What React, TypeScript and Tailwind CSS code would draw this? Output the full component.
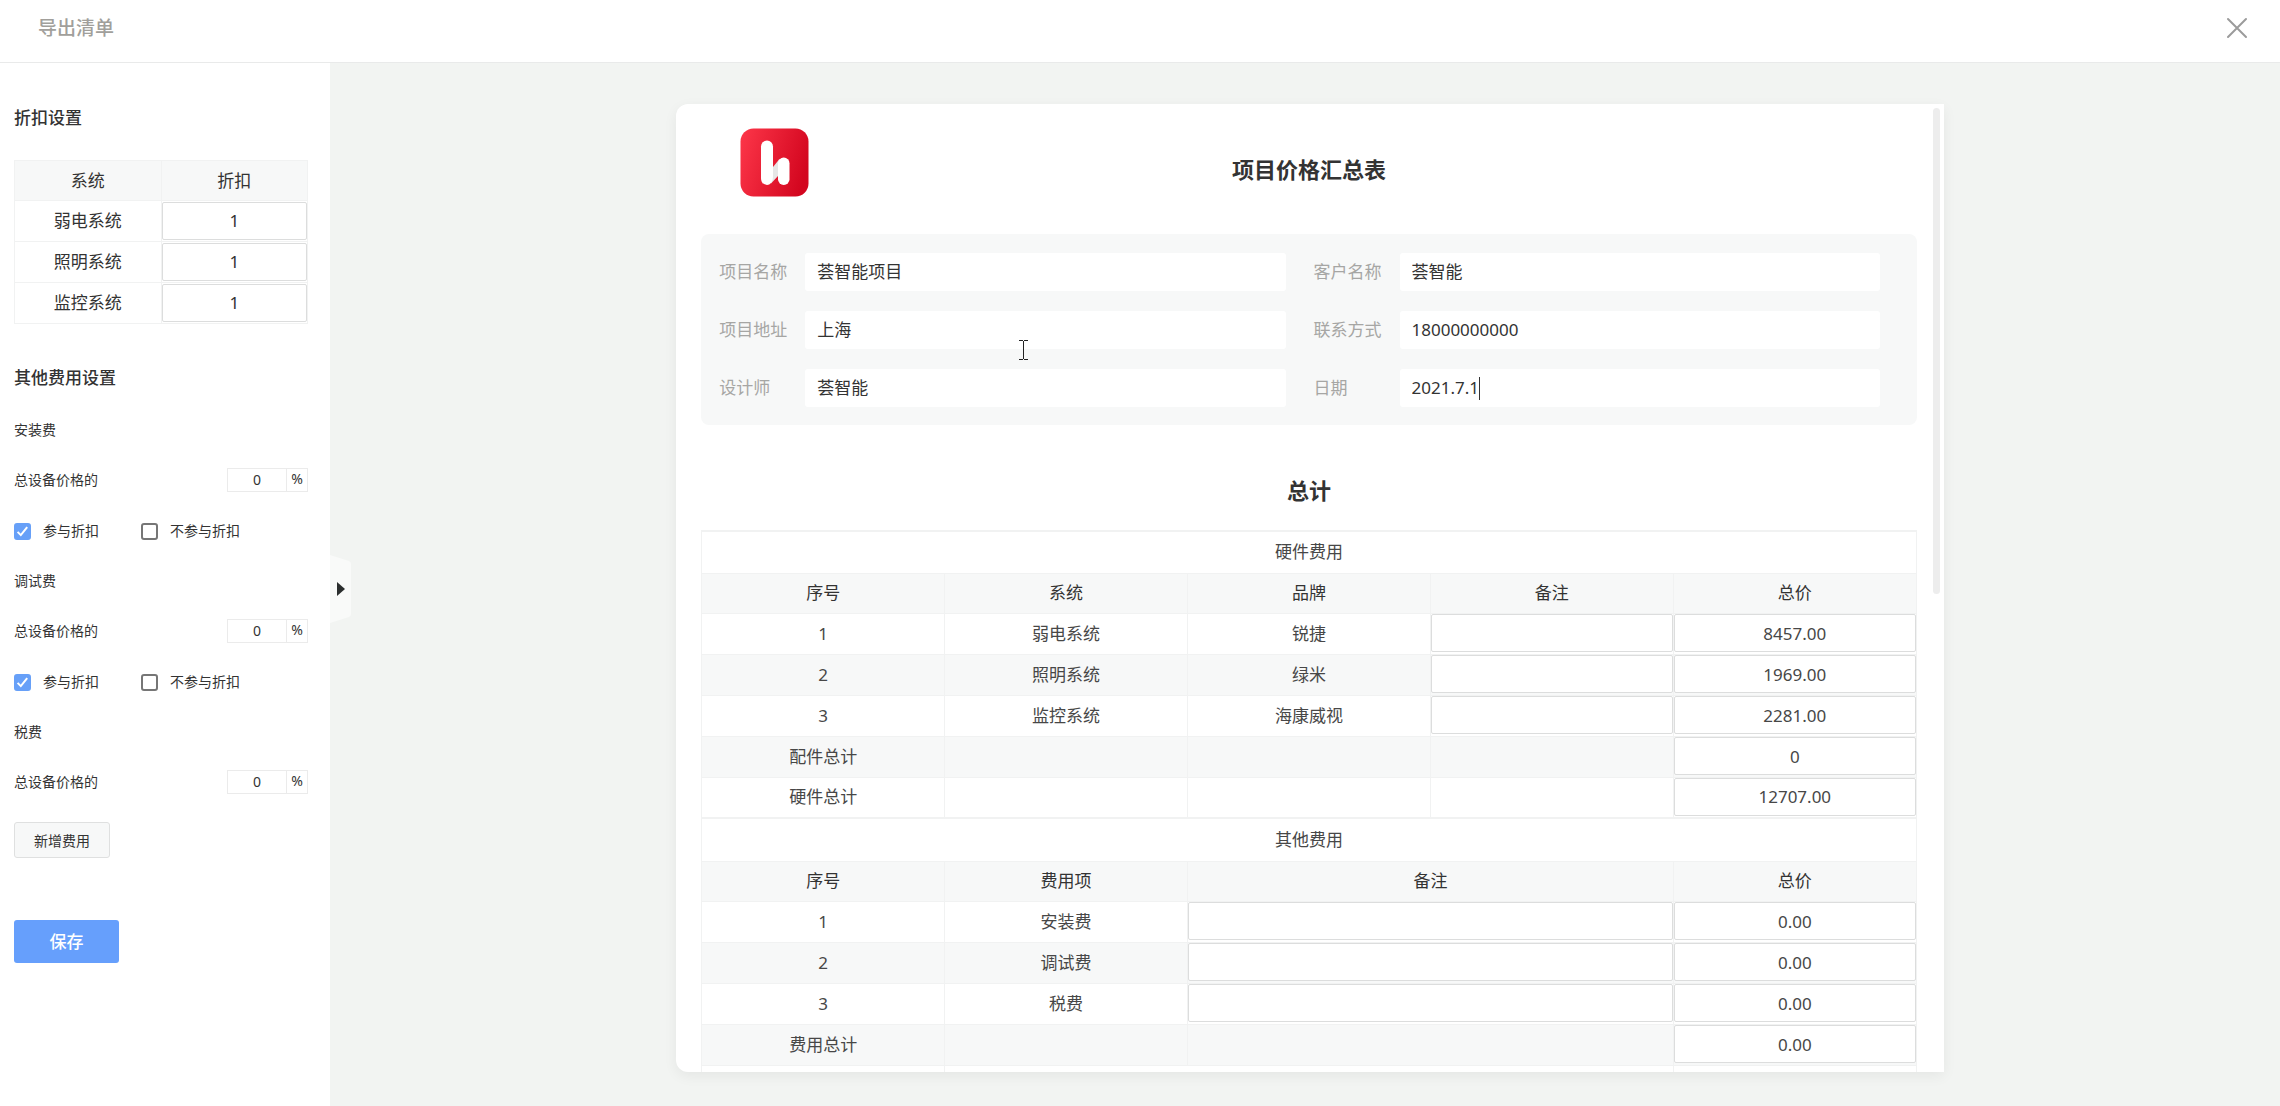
import React, { useState } from "react";

const DISCOUNTS = ["弱电系统", "照明系统", "监控系统"];

const HARDWARE = [
  { system: "弱电系统", brand: "锐捷", total: "8457.00" },
  { system: "照明系统", brand: "绿米", total: "1969.00" },
  { system: "监控系统", brand: "海康威视", total: "2281.00" },
];

const OTHER_FEES = ["安装费", "调试费", "税费"];

const CELL = "border border-[#f1f2f2] text-center font-normal";
const INPUT_CELL = "border border-[#f1f2f2] pb-px";

const CellInput = ({ label, value = "" }: { label: string; value?: string }) => (
  <input
    aria-label={label}
    defaultValue={value}
    className="block h-[38px] w-full rounded-xs border border-[#dcdddd] bg-white text-center outline-none"
  />
);

const DiscountTable = () => (
  <table className="mt-[30px] w-full table-fixed border-collapse text-[17px] leading-6">
    <thead>
      <tr className="h-10 bg-[#f7f8f8]">
        <th className={CELL}>系统</th>
        <th className={CELL}>折扣</th>
      </tr>
    </thead>
    <tbody>
      {DISCOUNTS.map(name => (
        <tr key={name} className="h-[41px]">
          <td className={CELL}>{name}</td>
          <td className={INPUT_CELL}><CellInput label={`${name}折扣`} value="1" /></td>
        </tr>
      ))}
    </tbody>
  </table>
);

const Check = ({ label, checked, onChange }: { label: string; checked: boolean; onChange: () => void }) => (
  <label className="flex items-center gap-3">
    <span className="grid size-[17px]">
      <input
        type="checkbox"
        checked={checked}
        onChange={onChange}
        className="col-start-1 row-start-1 size-[17px] appearance-none rounded-[3px] border-2 border-[#767676] bg-white checked:border-[#67a0f8] checked:bg-[#67a0f8]"
      />
      {checked && (
        <svg viewBox="0 0 17 17" className="pointer-events-none col-start-1 row-start-1 size-[17px]" fill="none" stroke="#fff" strokeWidth="2">
          <path d="M3.6 8.9 6.8 12.1 13.2 4.2" />
        </svg>
      )}
    </span>
    {label}
  </label>
);

const FeeGroup = ({ name, discountable }: { name: string; discountable: boolean }) => {
  const [joined, setJoined] = useState(true);
  const id = `rate-${name}`;

  return (
    <section className="mt-[30px] text-[14px] leading-5">
      <h3>{name}</h3>
      <div className="mt-7 flex h-6 items-center justify-between">
        <label htmlFor={id}>总设备价格的</label>
        <div className="flex h-6 w-[81px] border border-[#ebebeb]">
          <input id={id} defaultValue="0" className="w-[59px] border-r border-[#ebebeb] text-center outline-none" />
          <span className="flex-1 text-center">%</span>
        </div>
      </div>
      {discountable && (
        <div className="mt-[29px] flex h-5 items-center gap-[42px]">
          <Check label="参与折扣" checked={joined} onChange={() => setJoined(true)} />
          <Check label="不参与折扣" checked={!joined} onChange={() => setJoined(false)} />
        </div>
      )}
    </section>
  );
};

const Sidebar = () => (
  <aside className="relative w-[330px] shrink-0 bg-white pt-[43px] pr-[22px] pl-[14px]">
    <h2 className="text-[17px] leading-6 font-medium">折扣设置</h2>
    <DiscountTable />
    <h2 className="mt-[42px] text-[17px] leading-6 font-medium">其他费用设置</h2>
    <FeeGroup name="安装费" discountable />
    <FeeGroup name="调试费" discountable />
    <FeeGroup name="税费" discountable={false} />
    <button type="button" className="mt-7 block h-9 w-24 rounded-[3px] border border-[#dfe0e0] bg-[#f7f8f8] text-[14px]">
      新增费用
    </button>
    <button type="button" className="mt-[62px] block h-[43px] w-[105px] rounded-[3px] bg-[#669ffc] text-[17px] font-medium text-white">
      保存
    </button>
    {/* collapse handle on the panel edge */}
    <button type="button" aria-label="收起" className="absolute top-[492px] left-full h-[68px] w-[21px]">
      <svg viewBox="0 0 21 68" className="h-full w-full">
        <path d="M0 0 19 6Q21 7 21 9V59Q21 61 19 62L0 68Z" fill="#f9faf9" />
        <path d="M7 27V41L15 34Z" fill="#2b2e2e" />
      </svg>
    </button>
  </aside>
);

const Logo = () => (
  <svg viewBox="0 0 69 69" className="ml-[39px] size-[69px]" role="img" aria-label="荟智能">
    <defs>
      <linearGradient id="logo-red" x1="0" y1="0.2" x2="1" y2="0.5">
        <stop offset="0" stopColor="#fb3447" />
        <stop offset="1" stopColor="#d3061f" />
      </linearGradient>
    </defs>
    <rect x="0.5" y="0.5" width="68" height="68" rx="13" fill="url(#logo-red)" />
    <path d="M33 39 39.500 31 41 45 38 48 31 55.500 29 48Z" fill="#e6e6e6" />
    <path d="M21 18.500A6 6 0 0 1 33 18.500V49Q33 52 31 55 29.500 57 27 57 21 56.500 21 50Z" fill="#fff" />
    <rect x="38" y="29.500" width="11.500" height="27.500" rx="5.700" fill="#fff" />
  </svg>
);

const Field = ({ label, value, focused }: { label: string; value: string; focused?: boolean }) => {
  const id = `field-${label}`;
  return (
    <div className="flex h-[38px] items-center">
      <label htmlFor={id} className="w-[86px] shrink-0 text-[#a6a6a4]">{label}</label>
      <div className="flex h-full flex-1 items-center rounded-[3px] bg-white px-3">
        <input id={id} defaultValue={value} className={focused ? "field-sizing-content outline-none" : "w-full outline-none"} />
        {focused && <span className="h-[23px] w-px bg-[#333]" />}
      </div>
    </div>
  );
};

const ProjectInfo = () => (
  <div className="relative grid grid-cols-2 gap-x-7 gap-y-5 rounded-lg bg-[#f7f8f8] pt-[19px] pr-[37px] pb-[18px] pl-[18px] text-[17px]">
    <Field label="项目名称" value="荟智能项目" />
    <Field label="客户名称" value="荟智能" />
    <Field label="项目地址" value="上海" />
    <Field label="联系方式" value="18000000000" />
    <Field label="设计师" value="荟智能" />
    <Field label="日期" value="2021.7.1" focused />
    {/* text pointer */}
    <svg viewBox="0 0 9 20" className="pointer-events-none absolute top-[106px] left-[318px] h-5 w-[9px]" fill="none" stroke="#222">
      <path d="M0 .5H4M5 .5H9M4.500 1V19M0 19.500H4M5 19.500H9" />
    </svg>
  </div>
);

const SummaryTable = () => (
  <table className="mt-6 w-full table-fixed border-collapse text-[17px] leading-6 text-[#474747]">
    <tbody>
      <tr className="h-[42px]">
        <th colSpan={5} className={`${CELL} border-t-2`}>硬件费用</th>
      </tr>
      <tr className="h-10 bg-[#f7f8f8] text-[#333]">
        <th className={CELL}>序号</th>
        <th className={CELL}>系统</th>
        <th className={CELL}>品牌</th>
        <th className={CELL}>备注</th>
        <th className={CELL}>总价</th>
      </tr>
      {HARDWARE.map((row, i) => (
        <tr key={row.system} className="h-[41px] odd:bg-white even:bg-[#f7f8f8]">
          <td className={CELL}>{i + 1}</td>
          <td className={CELL}>{row.system}</td>
          <td className={CELL}>{row.brand}</td>
          <td className={INPUT_CELL}><CellInput label={`${row.system}备注`} /></td>
          <td className={INPUT_CELL}><CellInput label={`${row.system}总价`} value={row.total} /></td>
        </tr>
      ))}
      <tr className="h-[41px] bg-[#f7f8f8]">
        <td className={CELL}>配件总计</td>
        <td className={CELL} />
        <td className={CELL} />
        <td className={CELL} />
        <td className={INPUT_CELL}><CellInput label="配件总计" value="0" /></td>
      </tr>
      <tr className="h-[41px]">
        <td className={CELL}>硬件总计</td>
        <td className={CELL} />
        <td className={CELL} />
        <td className={CELL} />
        <td className={INPUT_CELL}><CellInput label="硬件总计" value="12707.00" /></td>
      </tr>
    </tbody>
    <tbody>
      <tr className="h-[43px]">
        <th colSpan={5} className={`${CELL} border-t-2`}>其他费用</th>
      </tr>
      <tr className="h-10 bg-[#f7f8f8] text-[#333]">
        <th className={CELL}>序号</th>
        <th className={CELL}>费用项</th>
        <th colSpan={2} className={CELL}>备注</th>
        <th className={CELL}>总价</th>
      </tr>
      {OTHER_FEES.map((name, i) => (
        <tr key={name} className="h-[41px] odd:bg-white even:bg-[#f7f8f8]">
          <td className={CELL}>{i + 1}</td>
          <td className={CELL}>{name}</td>
          <td colSpan={2} className={INPUT_CELL}><CellInput label={`${name}备注`} /></td>
          <td className={INPUT_CELL}><CellInput label={`${name}总价`} value="0.00" /></td>
        </tr>
      ))}
      <tr className="h-[41px] bg-[#f7f8f8]">
        <td className={CELL}>费用总计</td>
        <td className={CELL} />
        <td colSpan={2} className={CELL} />
        <td className={INPUT_CELL}><CellInput label="费用总计" value="0.00" /></td>
      </tr>
      <tr className="h-[41px]">
        <td className={CELL} />
        <td colSpan={3} className={CELL} />
        <td className={CELL} />
      </tr>
    </tbody>
  </table>
);

export default function App() {
  return (
    <div className="flex h-screen flex-col bg-[#f2f4f2] font-['Noto_Sans','Noto_Sans_CJK_SC',sans-serif] text-[#333]">
      <header className="flex h-[63px] shrink-0 items-center justify-between border-b border-[#e9eaea] bg-white pr-[32px] pb-[6px] pl-[38px]">
        <h1 className="text-[19px] font-medium text-[#a19f9b]">导出清单</h1>
        <button type="button" aria-label="关闭" className="size-[22px]">
          <svg viewBox="0 0 22 22" className="size-[22px]" stroke="#9b9b9b" strokeWidth="2" strokeLinecap="round">
            <path d="M2 2 20 20M20 2 2 20" />
          </svg>
        </button>
      </header>
      <div className="flex min-h-0 flex-1">
        <Sidebar />
        <main className="flex min-w-0 flex-1 justify-center pt-[41px] pb-[34px]">
          <div className="relative ml-[10px] w-[65%] overflow-hidden rounded-l-xl bg-white pr-[27px] pl-[25px] shadow-[0_4px_14px_rgba(0,0,0,0.06)]">
            <div className="grid h-[130px] grid-cols-[1fr_auto_1fr] items-start pt-6">
              <Logo />
              <h2 className="mt-[25px] text-[22px] leading-8 font-bold">项目价格汇总表</h2>
            </div>
            <ProjectInfo />
            <h2 className="mt-[49px] text-center text-[22px] leading-8 font-bold">总计</h2>
            <SummaryTable />
            {/* scrollbar thumb */}
            <div className="absolute top-1 right-1 h-[486px] w-[7px] rounded-full bg-[#ededed]" />
          </div>
        </main>
      </div>
    </div>
  );
}
